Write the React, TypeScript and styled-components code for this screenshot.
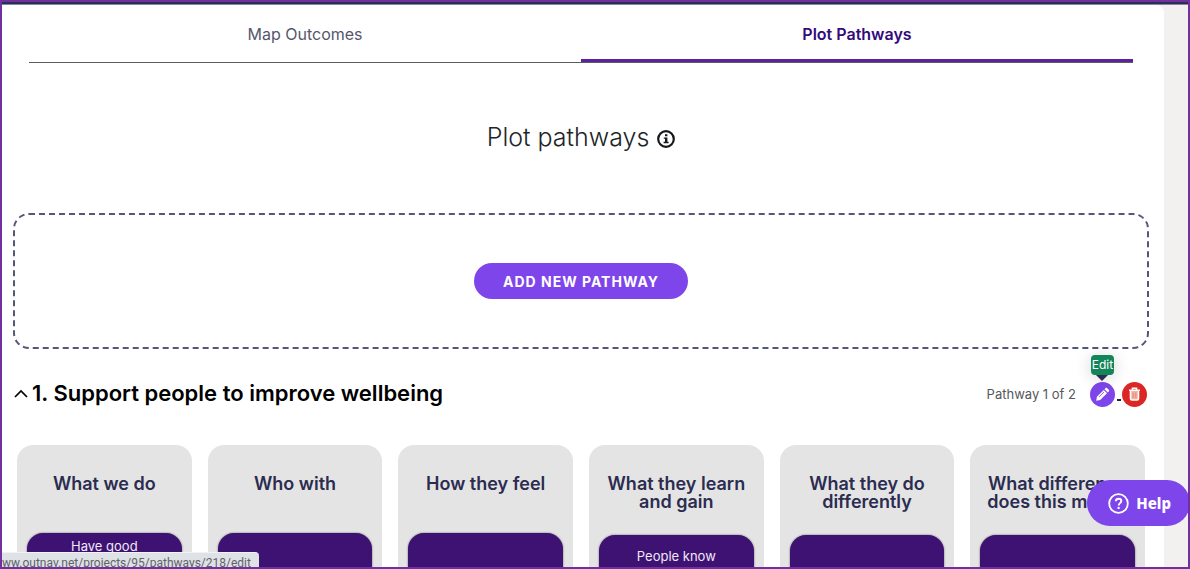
import React from "react";
import styled, { createGlobalStyle } from "styled-components";

const GlobalStyle = createGlobalStyle`
  *, *::before, *::after { box-sizing: border-box; }
  body {
    margin: 0;
    background: #f2f1ef;
    font-family: Inter, "Liberation Sans", sans-serif;
    font-optical-sizing: none;
    color: #212529;
  }
  h1, h2, h3, p { margin: 0; }
  button { font-family: inherit; cursor: pointer; }
`;

const Frame = styled.div`
  position: relative;
  height: 100vh;
  overflow: hidden;
  border: 2px solid #7030a0;
  background: #f2f1ef;
`;

const TopStrip = styled.div`
  height: 3px;
  background: #2b2f55;
  border-bottom: 1px solid #8486a0;
`;

const Page = styled.main`
  margin-right: 24px;
  padding: 0 15px 40px 11px;
  background: #fff;
  border-radius: 0 8px 0 0;
`;

const Tabs = styled.nav`
  display: grid;
  grid-template-columns: 1fr 1fr;
  margin: 0 16px;
  border-bottom: 1px solid #5c5c5c;
`;

const Tab = styled.a<{ $active?: boolean }>`
  height: 57px;
  padding-top: 17px;
  border-bottom: 3px solid ${(p) => (p.$active ? "#5b21a0" : "transparent")};
  color: ${(p) => (p.$active ? "#330b7a" : "#55586c")};
  font-size: 16px;
  font-weight: ${(p) => (p.$active ? 600 : 400)};
  line-height: 24px;
  text-align: center;
  text-decoration: none;
`;

const TitleRow = styled.header`
  display: flex;
  justify-content: center;
  align-items: center;
  gap: 8px;
  padding: 57px 0 59px;
`;

const Title = styled.h1`
  font-size: 25px;
  font-weight: 300;
  line-height: 34px;
`;

const InfoButton = styled.button`
  display: flex;
  margin-top: 4px;
  padding: 0;
  border: 0;
  background: none;
  color: #16181b;
`;

const AddPanel = styled.section`
  display: flex;
  justify-content: center;
  align-items: center;
  height: 136px;
  border: 2px dashed #54567a;
  border-radius: 16px;
`;

const AddButton = styled.button`
  height: 36px;
  padding: 0 29px;
  border: 0;
  border-radius: 18px;
  background: #7e45ea;
  color: #fff;
  font-size: 14px;
  font-weight: 700;
  letter-spacing: 1px;
`;

const PathwayHeader = styled.div`
  display: flex;
  justify-content: space-between;
  align-items: center;
  height: 30px;
  margin: 30px 2px 0 1px;
`;

const PathwayToggle = styled.button`
  display: flex;
  align-items: center;
  gap: 4px;
  padding: 0 0 2px;
  border: 0;
  background: none;
  color: #000;
`;

const PathwayTitle = styled.h2`
  color: #000;
  font-size: 22px;
  font-weight: 600;
  line-height: 30px;
`;

const Actions = styled.div`
  display: flex;
  align-items: center;
`;

const Count = styled.span`
  margin-right: 14px;
  color: #55585c;
  font-size: 13px;
`;

const ActionLink = styled.a<{ $color: string }>`
  position: relative;
  display: flex;
  justify-content: center;
  align-items: center;
  width: 25px;
  height: 25px;
  border-radius: 50%;
  background: ${(p) => p.$color};
  color: #fff;
`;

const Dash = styled.span`
  width: 4px;
  height: 2px;
  margin: 11px 1px 0 2px;
  background: #212529;
`;

const Tooltip = styled.span`
  position: absolute;
  bottom: 32px;
  left: 1px;
  width: 23px;
  border-radius: 4px;
  background: #13855a;
  box-shadow: 0 2px 16px rgba(0, 0, 0, 0.18);
  color: #fff;
  font-size: 12px;
  line-height: 20px;
  text-align: center;

  &::after {
    content: "";
    position: absolute;
    top: 100%;
    left: 5px;
    border: 6px solid transparent;
    border-top-color: #2b2c50;
    border-bottom: 0;
  }
`;

const Columns = styled.div`
  display: grid;
  grid-template-columns: repeat(6, 1fr);
  gap: 16px;
  margin: 36px 4px 0;
`;

const Column = styled.section`
  padding: 30px 10px 20px;
  border-radius: 16px;
  background: #e4e4e4;
`;

const ColumnTitle = styled.h3`
  min-height: 34px;
  margin-bottom: 24px;
  color: #2b2c50;
  font-size: 18px;
  font-weight: 600;
  font-optical-sizing: auto;
  line-height: 18px;
  text-align: center;
`;

const Outcome = styled.div<{ $tall?: boolean }>`
  min-height: 110px;
  padding: ${(p) => (p.$tall ? 3 : 11)}px 32px;
  border-radius: 16px;
  background: #3e1272;
  box-shadow: 0 0 2px rgba(0, 0, 0, 0.6);
  color: #efe8f6;
  font-size: 13px;
  line-height: 20px;
  text-align: center;
`;

const HelpButton = styled.button`
  position: absolute;
  right: -2px;
  bottom: 41px;
  display: flex;
  align-items: center;
  gap: 7px;
  height: 46px;
  padding: 0 19px 0 21px;
  border: 0;
  border-radius: 23px;
  background: #7e45ea;
  color: #fff;
  font-family: "Noto Sans", sans-serif;
  font-size: 15px;
  font-weight: 800;
`;

const StatusBar = styled.div`
  position: absolute;
  left: 0;
  bottom: 0;
  max-width: 100%;
  height: 15px;
  padding-right: 8px;
  overflow: hidden;
  border-top: 1px solid #f1f2f4;
  border-radius: 0 4px 0 0;
  background: #dee1e6;
  color: #5f6368;
  font-family: Roboto, sans-serif;
  font-size: 12px;
  line-height: 21px;
  white-space: nowrap;
`;

const columns = [
  { title: "What we do", outcome: "Have good", tall: true },
  { title: "Who with" },
  { title: "How they feel" },
  { title: "What they learn and gain", outcome: "People know" },
  { title: "What they do differently" },
  { title: "What difference does this make?" },
];

const InfoIcon = () => (
  <svg width="18" height="18" viewBox="0 0 18 18" fill="none" aria-hidden="true">
    <circle cx="9" cy="9" r="7.8" stroke="currentColor" strokeWidth="2.2" />
    <path d="M8 4.2h2.4v2H8zM6.8 7.4h3.6v4.4h1.2v1.4H6.6v-1.4H8V8.8H6.8z" fill="currentColor" />
  </svg>
);

const ChevronUp = () => (
  <svg width="14" height="10" viewBox="0 0 14 10" fill="none" aria-hidden="true">
    <path d="M1 9l6-6 6 6" stroke="currentColor" strokeWidth="1.7" />
  </svg>
);

const PencilIcon = () => (
  <svg width="15" height="15" viewBox="0 0 15 15" aria-hidden="true">
    <path
      d="M1.2 13.8l.7-4L8.7 3l3.3 3.3-6.8 6.8zM9.5 2.2l1-1c.5-.5 1.2-.5 1.7 0l1.6 1.6c.5.5.5 1.2 0 1.7l-1 1z"
      fill="currentColor"
    />
    <path d="M4 10l5-5" stroke="#7e45ea" strokeWidth=".8" />
  </svg>
);

const TrashIcon = () => (
  <svg width="13" height="14" viewBox="0 0 13 14" fill="none" aria-hidden="true">
    <path d="M2.5 4v7.5c0 1 .5 1.5 1.5 1.5h5c1 0 1.5-.5 1.5-1.5V4" fill="#f3b29c" stroke="currentColor" strokeWidth="1.6" />
    <path d="M1 3.2h11M4.5 3V1.2h4V3" stroke="currentColor" strokeWidth="1.6" />
    <path d="M5.2 5.5v5.5M7.8 5.5v5.5" stroke="#dd7a66" strokeWidth=".7" />
  </svg>
);

const HelpIcon = () => (
  <svg width="21" height="21" viewBox="0 0 21 21" fill="none" aria-hidden="true">
    <circle cx="10.5" cy="10.5" r="9.3" stroke="currentColor" strokeWidth="1.8" />
    <path d="M7.8 8.3c.1-1.6 1.2-2.5 2.8-2.5s2.7.9 2.7 2.3c0 2-2.6 2.1-2.6 4.3" stroke="currentColor" strokeWidth="1.9" />
    <circle cx="10.6" cy="14.9" r="1.2" fill="currentColor" />
  </svg>
);

export default function App() {
  return (
    <Frame>
      <GlobalStyle />
      <TopStrip />
      <Page>
        <Tabs>
          <Tab href="#outcomes">Map Outcomes</Tab>
          <Tab href="#pathways" $active aria-current="page">Plot Pathways</Tab>
        </Tabs>
        <TitleRow>
          <Title>Plot pathways</Title>
          <InfoButton aria-label="About pathways"><InfoIcon /></InfoButton>
        </TitleRow>
        <AddPanel>
          <AddButton>ADD NEW PATHWAY</AddButton>
        </AddPanel>
        <PathwayHeader>
          <PathwayToggle aria-expanded="true">
            <ChevronUp />
            <PathwayTitle as="span">1. Support people to improve wellbeing</PathwayTitle>
          </PathwayToggle>
          <Actions>
            <Count>Pathway 1 of 2</Count>
            <ActionLink href="#edit" $color="#7e45ea" aria-label="Edit">
              <PencilIcon />
              <Tooltip role="tooltip">Edit</Tooltip>
            </ActionLink>
            <Dash />
            <ActionLink href="#delete" $color="#dc2626" aria-label="Delete">
              <TrashIcon />
            </ActionLink>
          </Actions>
        </PathwayHeader>
        <Columns>
          {columns.map((c) => (
            <Column key={c.title}>
              <ColumnTitle>{c.title}</ColumnTitle>
              <Outcome $tall={c.tall}>{c.outcome}</Outcome>
            </Column>
          ))}
        </Columns>
      </Page>
      <HelpButton><HelpIcon />Help</HelpButton>
      <StatusBar>ww.outnav.net/projects/95/pathways/218/edit</StatusBar>
    </Frame>
  );
}
